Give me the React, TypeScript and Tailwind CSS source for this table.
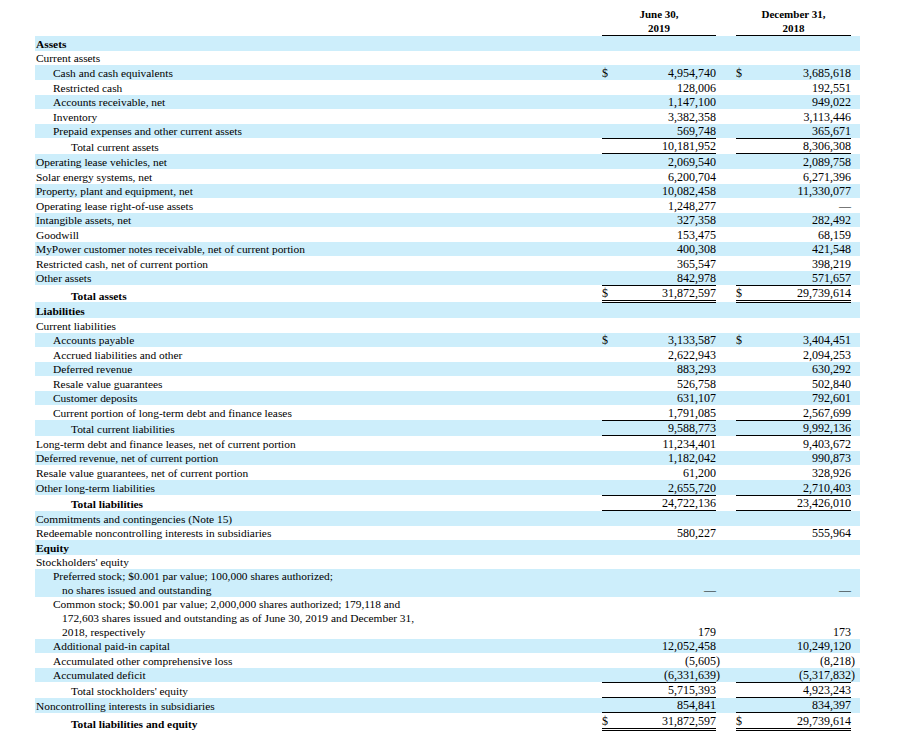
import { clsx } from "clsx"

type Line = "single" | "double"
type Row = {
  label: string | string[]
  indent?: 0 | 1 | 2
  bold?: boolean
  a?: string
  b?: string
  dollar?: boolean
  neg?: boolean
  top?: boolean
  bottom?: Line
  h?: string
}

const rows: Row[] = [
  { label: "Assets", bold: true, h: "h-[15px]" },
  { label: "Current assets", h: "h-[14px]" },
  { label: "Cash and cash equivalents", indent: 1, a: "4,954,740", b: "3,685,618", dollar: true, h: "h-[15px]" },
  { label: "Restricted cash", indent: 1, a: "128,006", b: "192,551", h: "h-[15px]" },
  { label: "Accounts receivable, net", indent: 1, a: "1,147,100", b: "949,022" },
  { label: "Inventory", indent: 1, a: "3,382,358", b: "3,113,446", h: "h-[15px]" },
  { label: "Prepaid expenses and other current assets", indent: 1, a: "569,748", b: "365,671" },
  { label: "Total current assets", indent: 2, a: "10,181,952", b: "8,306,308", top: true, bottom: "single", h: "h-[16px]" },
  { label: "Operating lease vehicles, net", a: "2,069,540", b: "2,089,758", h: "h-[15px]" },
  { label: "Solar energy systems, net", a: "6,200,704", b: "6,271,396", h: "h-[15px]" },
  { label: "Property, plant and equipment, net", a: "10,082,458", b: "11,330,077" },
  { label: "Operating lease right-of-use assets", a: "1,248,277", b: "—", h: "h-[15px]" },
  { label: "Intangible assets, net", a: "327,358", b: "282,492" },
  { label: "Goodwill", a: "153,475", b: "68,159", h: "h-[15px]" },
  { label: "MyPower customer notes receivable, net of current portion", a: "400,308", b: "421,548" },
  { label: "Restricted cash, net of current portion", a: "365,547", b: "398,219", h: "h-[15px]" },
  { label: "Other assets", a: "842,978", b: "571,657" },
  { label: "Total assets", indent: 2, bold: true, a: "31,872,597", b: "29,739,614", dollar: true, top: true, bottom: "double", h: "h-[17px]" },
  { label: "Liabilities", bold: true, h: "h-[16px]" },
  { label: "Current liabilities", h: "h-[15px]" },
  { label: "Accounts payable", indent: 1, a: "3,133,587", b: "3,404,451", dollar: true },
  { label: "Accrued liabilities and other", indent: 1, a: "2,622,943", b: "2,094,253", h: "h-[15px]" },
  { label: "Deferred revenue", indent: 1, a: "883,293", b: "630,292" },
  { label: "Resale value guarantees", indent: 1, a: "526,758", b: "502,840", h: "h-[15px]" },
  { label: "Customer deposits", indent: 1, a: "631,107", b: "792,601" },
  { label: "Current portion of long-term debt and finance leases", indent: 1, a: "1,791,085", b: "2,567,699", h: "h-[15px]" },
  { label: "Total current liabilities", indent: 2, a: "9,588,773", b: "9,992,136", top: true, bottom: "single", h: "h-[16px]" },
  { label: "Long-term debt and finance leases, net of current portion", a: "11,234,401", b: "9,403,672", h: "h-[15px]" },
  { label: "Deferred revenue, net of current portion", a: "1,182,042", b: "990,873" },
  { label: "Resale value guarantees, net of current portion", a: "61,200", b: "328,926", h: "h-[15px]" },
  { label: "Other long-term liabilities", a: "2,655,720", b: "2,710,403", h: "h-[15px]" },
  { label: "Total liabilities", indent: 2, bold: true, a: "24,722,136", b: "23,426,010", top: true, bottom: "single", h: "h-[16px]" },
  { label: "Commitments and contingencies (Note 15)", h: "h-[15px]" },
  { label: "Redeemable noncontrolling interests in subsidiaries", a: "580,227", b: "555,964" },
  { label: "Equity", bold: true, h: "h-[15px]" },
  { label: "Stockholders' equity" },
  {
    label: ["Preferred stock; $0.001 par value; 100,000 shares authorized;", "no shares issued and outstanding"],
    indent: 1,
    a: "—",
    b: "—",
    h: "h-[28px]",
  },
  {
    label: [
      "Common stock; $0.001 par value; 2,000,000 shares authorized; 179,118 and",
      "172,603 shares issued and outstanding as of June 30, 2019 and December 31,",
      "2018, respectively",
    ],
    indent: 1,
    a: "179",
    b: "173",
    h: "h-[42px]",
  },
  { label: "Additional paid-in capital", indent: 1, a: "12,052,458", b: "10,249,120" },
  { label: "Accumulated other comprehensive loss", indent: 1, a: "(5,605", b: "(8,218", neg: true, h: "h-[15px]" },
  { label: "Accumulated deficit", indent: 1, a: "(6,331,639", b: "(5,317,832", neg: true },
  { label: "Total stockholders' equity", indent: 2, a: "5,715,393", b: "4,923,243", top: true, bottom: "single", h: "h-[16px]" },
  { label: "Noncontrolling interests in subsidiaries", a: "854,841", b: "834,397", bottom: "single", h: "h-[15px]" },
  { label: "Total liabilities and equity", indent: 2, bold: true, a: "31,872,597", b: "29,739,614", dollar: true, bottom: "double", h: "h-[18px]" },
]

const COLS = "grid grid-cols-[567px_114px_6px_14px_115px_6px_3px]"

function Amount({ value, dollar, top, bottom }: { value?: string; dollar?: boolean; top?: boolean; bottom?: Line }) {
  return (
    <div
      className={clsx(
        "flex items-end justify-between text-[12px] leading-[14px]",
        top && "border-t border-black",
        bottom === "single" && "border-b border-black",
        bottom === "double" && "border-b-[3px] border-double border-black"
      )}
    >
      <span>{dollar ? "$" : ""}</span>
      <span>{value ?? ""}</span>
    </div>
  )
}

function Label({ r }: { r: Row }) {
  const lines = Array.isArray(r.label) ? r.label : [r.label]
  const pad = r.indent === 2 ? "pl-[36px]" : r.indent === 1 ? "pl-[18px]" : "pl-[1px]"
  return (
    <div className={clsx("flex flex-col justify-end text-[11.4px] leading-[14px]", r.bold && "font-bold")}>
      {lines.map((l, i) => (
        <div key={i} className={clsx("whitespace-nowrap", i === 0 ? pad : "pl-[27px]")}>
          {l}
        </div>
      ))}
    </div>
  )
}

export default function App() {
  return (
    <div className="min-h-[749px] w-[904px] bg-white font-['Liberation_Serif',serif] text-black">
      <div className="ml-[35px] w-[825px]">
        {/* column heads */}
        <div className={clsx(COLS, "h-[36px]")}>
          <div />
          <div className="flex flex-col items-center justify-end border-b border-black text-[11px] font-bold leading-[14px]">
            <span>June 30,</span>
            <span>2019</span>
          </div>
          <div />
          <div />
          <div className="flex flex-col items-center justify-end border-b border-black text-[11px] font-bold leading-[14px]">
            <span>December 31,</span>
            <span>2018</span>
          </div>
          <div />
          <div />
        </div>

        {rows.map((r, i) => (
          <div key={i} className={clsx(COLS, r.h ?? "h-[14px]", i % 2 === 0 && "bg-[#cdeefb]")}>
            <Label r={r} />
            <Amount value={r.a} dollar={r.dollar} top={r.top} bottom={r.bottom} />
            <div className="flex items-end text-[12px] leading-[14px]">{r.neg ? ")" : ""}</div>
            <div />
            <Amount value={r.b} dollar={r.dollar} top={r.top} bottom={r.bottom} />
            <div className="flex items-end text-[12px] leading-[14px]">{r.neg ? ")" : ""}</div>
            <div />
          </div>
        ))}
      </div>
    </div>
  )
}
